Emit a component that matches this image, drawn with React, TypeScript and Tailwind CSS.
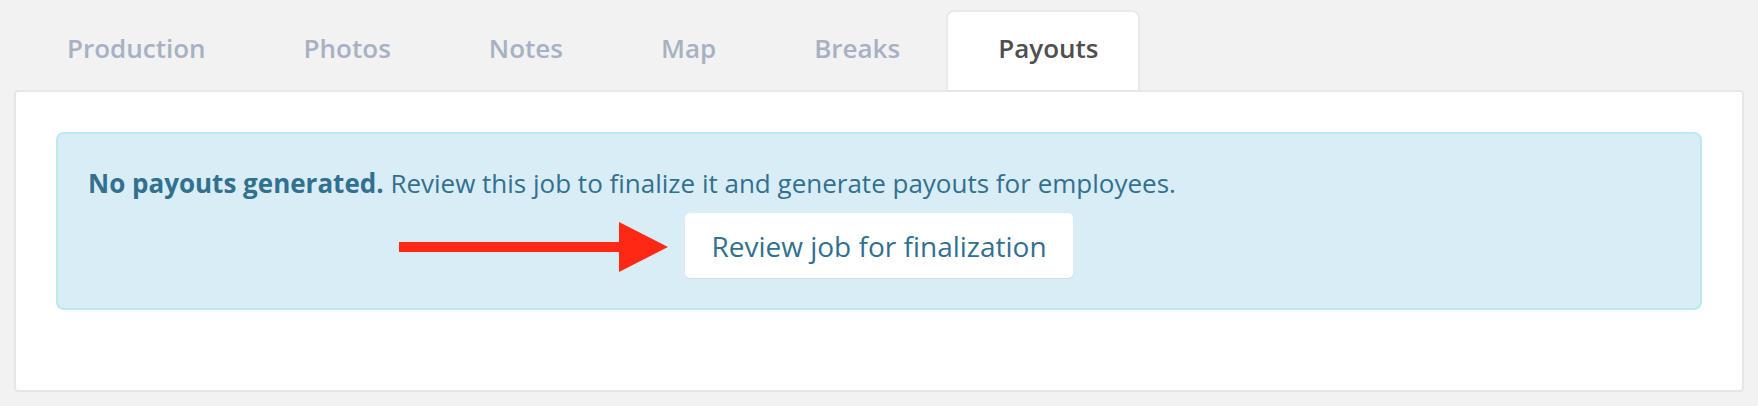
import React from "react";

const tabs = ["Production", "Photos", "Notes", "Map", "Breaks", "Payouts"];

function Arrow() {
  return (
    <svg
      className="absolute right-[calc(100%+17px)] top-[9px]"
      width="269"
      height="50"
      viewBox="0 0 269 50"
    >
      <rect x="0" y="20" width="222" height="10" fill="#fe2814" />
      <polygon points="220,0 269,25 220,50" fill="#fe2814" />
    </svg>
  );
}

export default function App() {
  return (
    <div className="min-h-[406px] bg-[#f2f2f2] px-[14px] pt-[10px] pb-[13px] font-['Open_Sans',sans-serif]">
      <nav className="flex h-[80px] gap-[6px] pl-[7px]">
        {tabs.map((t) => {
          const active = t === "Payouts";
          return (
            <div
              key={t}
              className={
                active
                  ? "-ml-[6px] flex h-[80px] items-center rounded-t-[8px] border-2 border-b-0 border-[#e7eaed] bg-white pl-[50px] pr-[40px] pb-[5px] text-[26px] font-semibold text-[#4f4f4f]"
                  : "flex h-[80px] items-center border-2 border-b-0 border-transparent px-[44px] pb-[5px] text-[26px] font-semibold text-[#a8b1c2]"
              }
            >
              {t}
            </div>
          );
        })}
      </nav>
      <div className="rounded-[4px] border-2 border-[#e4e7ea] bg-white p-[40px]">
        <div className="mb-[40px] rounded-[8px] border-2 border-[#bce8f1] bg-[#d9edf7] px-[30px] py-[30px] text-[#31708f]">
          <p className="mb-[11px] text-[26px] leading-[38px]">
            <span className="font-bold">No payouts generated.</span> Review
            this job to finalize it and generate payouts for employees.
          </p>
          <div className="flex justify-center">
            <div className="relative">
              <Arrow />
              <button className="flex h-[65px] items-center rounded-[5px] bg-white px-[26px] text-[28px] leading-[40px] text-[#31708f] shadow-[0_1px_1px_rgba(0,0,0,0.06)]">
                Review job for finalization
              </button>
            </div>
          </div>
        </div>
      </div>
    </div>
  );
}
